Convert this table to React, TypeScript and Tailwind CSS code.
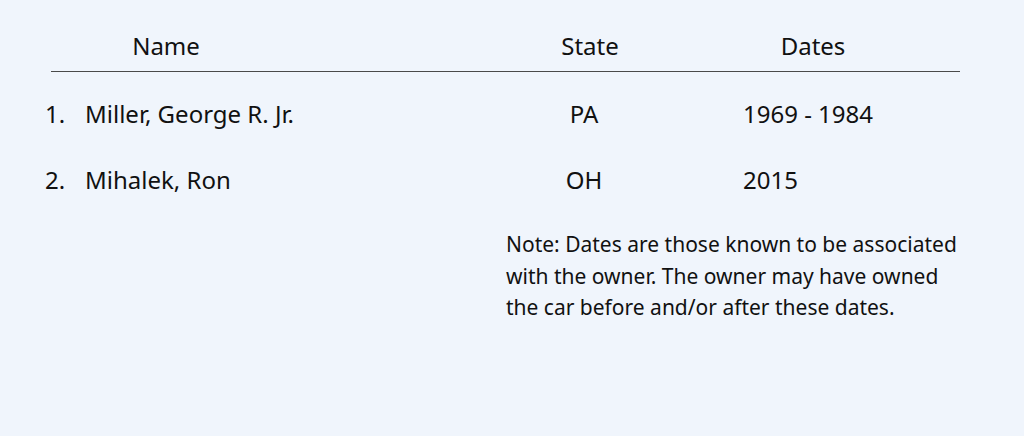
import React from 'react';

const owners = [
    { name: 'Miller, George R. Jr.', state: 'PA', dates: '1969 - 1984' },
    { name: 'Mihalek, Ron', state: 'OH', dates: '2015' },
];

const App: React.FC = () => {
    return (
        <div className="w-[1024px] h-[436px] bg-[#f0f5fc] text-[#111111] font-['Noto_Sans',sans-serif] pt-[30px]">
            <div className="ml-[51px] w-[909px] flex border-b border-[#4a4a4a] pb-[9px] text-[24px] leading-[32px]">
                <div className="w-[230px] text-center">Name</div>
                <div className="w-[259px]" />
                <div className="w-[100px] text-center">State</div>
                <div className="w-[123px]" />
                <div className="w-[100px] text-center">Dates</div>
            </div>

            <ol className="pl-[45px] pt-[26px] text-[24px] leading-[32px]">
                {owners.map((o, i) => (
                    <li key={o.name} className="flex h-[66px]">
                        <span className="w-[40px]">{i + 1}.</span>
                        <span className="w-[449px]">{o.name}</span>
                        <span className="w-[100px] text-center">{o.state}</span>
                        <span className="ml-[109px]">{o.dates}</span>
                    </li>
                ))}
            </ol>

            <p className="ml-[506px] w-[462px] mt-[-1px] text-[21px] leading-[31.5px]">
                Note: Dates are those known to be associated with the owner. The owner may have owned the car before and/or after these dates.
            </p>
        </div>
    );
};

export default App;
